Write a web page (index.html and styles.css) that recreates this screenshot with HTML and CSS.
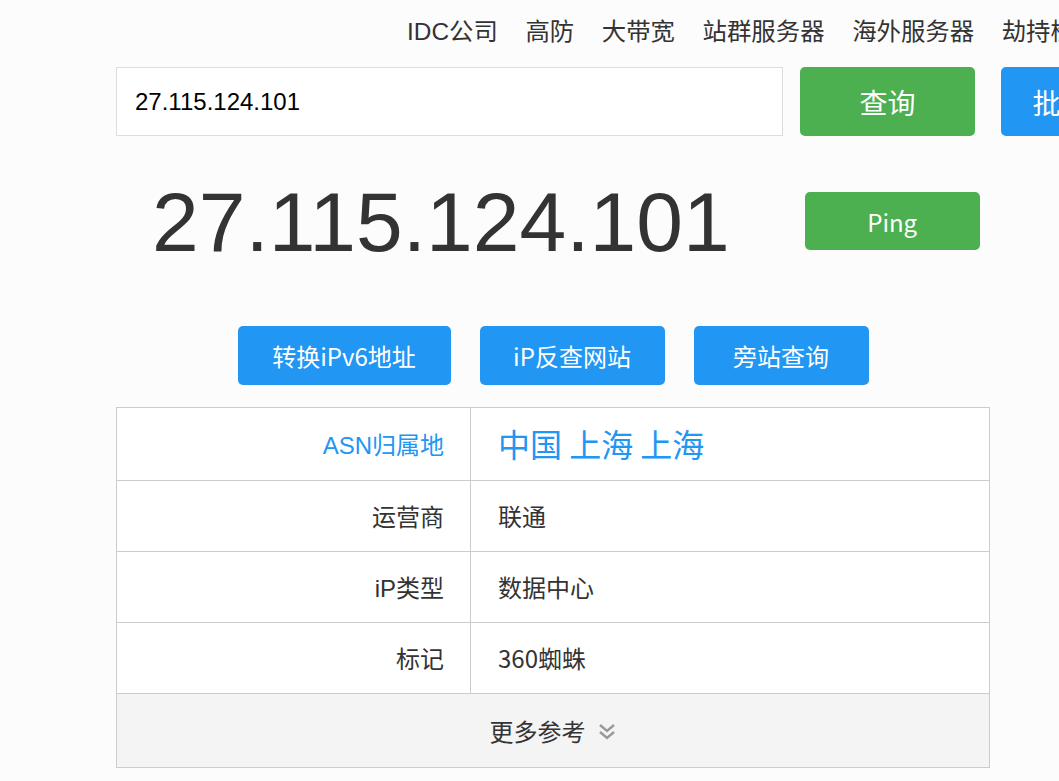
FILE: index.html
```html
<!DOCTYPE html>
<html lang="zh-CN">
<head>
<meta charset="utf-8">
<title>IP查询</title>
<link rel="stylesheet" href="styles.css">
</head>
<body>
<div class="page">
  <nav class="nav">
    <a>IDC公司</a>
    <a>高防</a>
    <a>大带宽</a>
    <a>站群服务器</a>
    <a>海外服务器</a>
    <a>劫持检测</a>
  </nav>
  <div class="wrap">
    <form class="search">
      <input class="search-input" type="text" value="27.115.124.101">
      <button class="btn btn-green btn-query" type="button">查询</button>
      <button class="btn btn-blue btn-batch" type="button">批量查询</button>
    </form>
    <div class="ip-row">
      <h1 class="ip">27.115.124.101</h1>
      <button class="btn btn-green btn-ping" type="button">Ping</button>
    </div>
    <div class="actions">
      <button class="btn btn-blue act w1" type="button">转换iPv6地址</button>
      <button class="btn btn-blue act w2" type="button">iP反查网站</button>
      <button class="btn btn-blue act w3" type="button">旁站查询</button>
    </div>
    <div class="table">
      <div class="row first">
        <div class="label blue">ASN归属地</div>
        <div class="value big-blue">中国 上海 上海</div>
      </div>
      <div class="row">
        <div class="label">运营商</div>
        <div class="value">联通</div>
      </div>
      <div class="row">
        <div class="label">iP类型</div>
        <div class="value">数据中心</div>
      </div>
      <div class="row">
        <div class="label">标记</div>
        <div class="value">360蜘蛛</div>
      </div>
      <div class="more">
        <span>更多参考</span>
        <svg class="chev" width="20" height="20" viewBox="0 0 20 20" aria-hidden="true">
          <polyline points="3,3 10,9 17,3" fill="none" stroke="#999" stroke-width="2.4"/>
          <polyline points="3,10 10,16 17,10" fill="none" stroke="#999" stroke-width="2.4"/>
        </svg>
      </div>
    </div>
  </div>
</div>
</body>
</html>
```
FILE: styles.css
```css
html, body {
  margin: 0;
  padding: 0;
  background: #fcfcfc;
  overflow: hidden;
}
body {
  font-family: "Liberation Sans", "Noto Sans CJK SC", sans-serif;
  color: #333;
}
.page {
  width: 1059px;
  height: 781px;
  overflow: hidden;
}
.nav {
  display: flex;
  gap: 27.6px;
  padding-left: 407px;
  height: 64px;
  align-items: center;
  white-space: nowrap;
  font-size: 24.4px;
  line-height: 30px;
  color: #333;
}
.nav a {
  flex: none;
}
.wrap {
  margin-left: 116px;
  width: 874px;
}
.search {
  display: flex;
  align-items: center;
  margin: 3px 0 0;
  width: 1100px;
}
.search-input {
  box-sizing: border-box;
  width: 667px;
  height: 69px;
  border: 1px solid #ddd;
  background: #fff;
  padding: 0 0 0 18px;
  font-family: "Liberation Sans", sans-serif;
  font-size: 24px;
  color: #000;
  outline: none;
  margin: 0;
}
.btn {
  border: 0;
  border-radius: 5px;
  color: #fff;
  font-family: "Noto Sans CJK SC", "Liberation Sans", sans-serif;
  padding: 0;
  margin: 0;
  flex: none;
  cursor: pointer;
}
.btn-green { background: #4caf50; }
.btn-blue { background: #2196f3; }
.btn-query {
  width: 175px;
  height: 69px;
  margin-left: 17px;
  font-size: 28px;
}
.btn-batch {
  width: 175px;
  height: 69px;
  margin-left: 26px;
  font-size: 28px;
}
.ip-row {
  display: flex;
  align-items: center;
  height: 170px;
  margin-top: 0;
}
.ip {
  margin: 0 0 0 36px;
  font-family: "Liberation Sans", sans-serif;
  font-weight: normal;
  font-size: 84px;
  line-height: 84px;
  color: #333;
  padding-top: 2px;
}
.btn-ping {
  width: 175px;
  height: 58px;
  margin-left: 75px;
  font-size: 24px;
  margin-top: 0;
}
.actions {
  display: flex;
  justify-content: center;
  gap: 29px;
  margin-top: 20px;
}
.act {
  height: 59px;
  font-size: 24px;
}
.w1 { width: 213px; }
.w2 { width: 185px; }
.w3 { width: 175px; }
.table {
  margin-top: 22px;
  border: 1px solid #ccc;
  background: #fff;
}
.row {
  display: grid;
  grid-template-columns: 354px 1fr;
  height: 70px;
  border-bottom: 1px solid #ccc;
}
.row.first {
  height: 72px;
}
.label {
  border-right: 1px solid #ccc;
  text-align: right;
  padding-right: 26px;
  display: flex;
  align-items: center;
  justify-content: flex-end;
  font-family: "Liberation Sans", "Noto Sans CJK SC", sans-serif;
  font-size: 24px;
  color: #333;
  padding-bottom: 2px;
}
.value {
  display: flex;
  align-items: center;
  padding-left: 27px;
  font-family: "Noto Sans CJK SC", "Liberation Sans", sans-serif;
  font-size: 24px;
  color: #333;
  padding-bottom: 2px;
}
.label.blue { color: #2196f3; }
.value.big-blue {
  color: #2196f3;
  font-size: 32px;
}
.more {
  height: 73px;
  background: #f4f4f4;
  display: flex;
  align-items: center;
  justify-content: center;
  gap: 10px;
  font-family: "Noto Sans CJK SC", sans-serif;
  font-size: 24px;
  color: #333;
}
.chev {
  margin-left: 1px;
  margin-top: 2px;
}
```
